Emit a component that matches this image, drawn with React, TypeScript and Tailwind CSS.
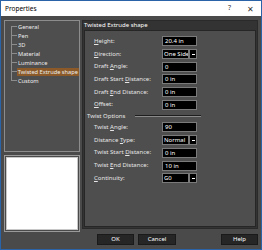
import React from "react";

const F = { fontFamily: '"Noto Sans", "Liberation Sans", sans-serif' };

function U({ t, i }: { t: string; i: number }) {
  return (
    <span>
      {t.slice(0, i)}
      <span className="underline">{t[i]}</span>
      {t.slice(i + 1)}
    </span>
  );
}

function Input({ v }: { v: string }) {
  return (
    <div className="w-[35px] h-[10px] bg-black border border-[#7a7a7a] text-white text-[6px] leading-[8px] pl-[2px] whitespace-nowrap">
      {v}
    </div>
  );
}

function Select({ v }: { v: string }) {
  return (
    <div className="flex">
      <div className="w-[27px] h-[10px] bg-black border border-[#7a7a7a] text-white text-[6px] leading-[8px] pl-[1px] whitespace-nowrap overflow-hidden">
        {v}
      </div>
      <div className="w-[8px] h-[10px] bg-black border border-[#7a7a7a] flex items-center justify-center">
        <div className="w-[3px] h-[1px] bg-white" />
      </div>
    </div>
  );
}

function Row({ label, ctrl }: { label: React.ReactNode; ctrl: React.ReactNode }) {
  return (
    <div className="flex items-center h-[12.7px]">
      <div className="w-[77px] text-[6px] text-[#e6e6e6] pl-[9px] whitespace-nowrap">{label}</div>
      {ctrl}
    </div>
  );
}

function Btn({ t, cls }: { t: string; cls: string }) {
  return (
    <div className={"h-[11px] bg-[#262626] border border-[#1a1a1a] text-white text-[6px] flex items-center justify-center " + cls}>
      {t}
    </div>
  );
}

export default function App() {
  const tree = ["General", "Pen", "3D", "Material", "Luminance", "Twisted Extrude shape", "Custom"];
  return (
    <div style={F} className="w-[262px] h-[250px] border border-[#2a63a8] bg-[#4a4a4a] flex flex-col overflow-hidden">
      <div className="h-[15px] bg-white flex items-center px-[4px] text-[6.5px] text-black shrink-0">
        <span className="flex-1">Properties</span>
        <span className="mr-[16px] text-[7px] text-[#333]">?</span>
        <span className="mr-[3px] text-[8px] text-[#333]">✕</span>
      </div>
      <div className="flex pt-[4px] pl-[3px] pr-[3px] gap-[2px]">
        <div className="w-[76px] flex flex-col gap-[3px]">
          <div className="h-[132px] border border-[#8c8c8c] bg-[#4e4e4e] pt-[1px] pl-[6px]">
            {tree.map((t, i) => (
              <div key={t} className="flex items-center h-[9px] relative">
                <div className={"absolute left-0 w-px bg-[#8c8c8c] " + (i === 0 ? "top-[4px] h-[5px]" : i === tree.length - 1 ? "top-0 h-[5px]" : "top-0 h-[9px]")} />
                <div className="w-[5px] h-px bg-[#8c8c8c] ml-[1px]" />
                <span
                  className={
                    "text-[5.7px] leading-[8px] px-[1px] text-[#ededed] whitespace-nowrap " +
                    (t === "Twisted Extrude shape" ? "bg-[#8b5a28]" : "")
                  }
                >
                  {t}
                </span>
              </div>
            ))}
          </div>
          <div className="h-[77px] border border-[#9a9a9a] p-[1px]">
            <div className="w-full h-full bg-white border border-[#c8c8c8]" />
          </div>
        </div>
        <div className="flex-1 flex flex-col">
          <div className="h-[209px] border border-[#2a2a2a] bg-[#333333] flex flex-col">
            <div className="h-[9px] text-[6px] leading-[9px] text-white pl-[1px] whitespace-nowrap">Twisted Extrude shape</div>
            <div className="flex-1 mx-[1px] mb-[1px] bg-[#4e4e4e] border border-[#262626] pt-[4px]">
              <Row label={<U t="Height:" i={0} />} ctrl={<Input v="20.4 in" />} />
              <Row label={<U t="Direction:" i={0} />} ctrl={<Select v="One Side" />} />
              <Row label={<U t="Draft Angle:" i={6} />} ctrl={<Input v="0" />} />
              <Row label={<U t="Draft Start Distance:" i={12} />} ctrl={<Input v="0 in" />} />
              <Row label={<U t="Draft End Distance:" i={6} />} ctrl={<Input v="0 in" />} />
              <Row label={<U t="Offset:" i={0} />} ctrl={<Input v="0 in" />} />
              <div className="flex items-center h-[10px] pl-[2px] text-[6px] text-[#e6e6e6] whitespace-nowrap">
                <span className="w-[48px]">Twist Options</span>
                <div className="w-[66px] h-[2px] border-t border-t-[#1e1e1e] border-b border-b-[#8a8a8a]" />
              </div>
              <Row label={<U t="Twist Angle:" i={6} />} ctrl={<Input v="90" />} />
              <Row label={<U t="Distance Type:" i={9} />} ctrl={<Select v="Normal" />} />
              <Row label={<U t="Twist Start Distance:" i={12} />} ctrl={<Input v="0 in" />} />
              <Row label={<U t="Twist End Distance:" i={6} />} ctrl={<Input v="10 in" />} />
              <Row label={<U t="Continuity:" i={0} />} ctrl={<Select v="G0" />} />
            </div>
          </div>
          <div className="flex mt-[5px]">
            <Btn t="OK" cls="ml-[15px] w-[37px]" />
            <Btn t="Cancel" cls="ml-[4px] w-[38px]" />
            <Btn t="Help" cls="ml-auto w-[37px]" />
          </div>
        </div>
      </div>
    </div>
  );
}
